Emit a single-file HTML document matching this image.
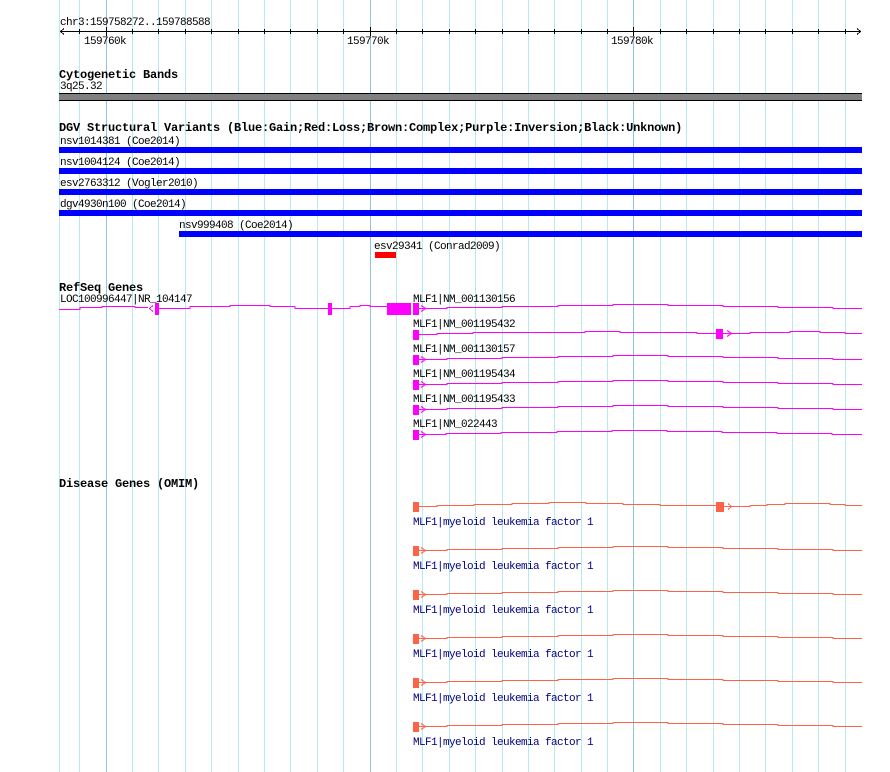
<!DOCTYPE html>
<html><head><meta charset="utf-8"><style>
html,body{margin:0;padding:0;background:#fff;}
svg{display:block;}
text{font-family:"Liberation Mono","DejaVu Sans Mono",monospace;font-size:11px;letter-spacing:-0.6px;fill:#000;}
text.h{font-weight:bold;font-size:12px;letter-spacing:-0.2px;}
text.d{fill:#000080;}
</style></head><body>
<svg width="890" height="772" viewBox="0 0 890 772" xmlns="http://www.w3.org/2000/svg">
<g stroke="#b4eaf2" stroke-width="1" shape-rendering="crispEdges">
<line x1="59.5" y1="0" x2="59.5" y2="772"/>
<line x1="79.5" y1="0" x2="79.5" y2="772"/>
<line x1="132.5" y1="0" x2="132.5" y2="772"/>
<line x1="158.5" y1="0" x2="158.5" y2="772"/>
<line x1="185.5" y1="0" x2="185.5" y2="772"/>
<line x1="211.5" y1="0" x2="211.5" y2="772"/>
<line x1="238.5" y1="0" x2="238.5" y2="772"/>
<line x1="264.5" y1="0" x2="264.5" y2="772"/>
<line x1="290.5" y1="0" x2="290.5" y2="772"/>
<line x1="317.5" y1="0" x2="317.5" y2="772"/>
<line x1="343.5" y1="0" x2="343.5" y2="772"/>
<line x1="396.5" y1="0" x2="396.5" y2="772"/>
<line x1="422.5" y1="0" x2="422.5" y2="772"/>
<line x1="449.5" y1="0" x2="449.5" y2="772"/>
<line x1="475.5" y1="0" x2="475.5" y2="772"/>
<line x1="502.5" y1="0" x2="502.5" y2="772"/>
<line x1="528.5" y1="0" x2="528.5" y2="772"/>
<line x1="554.5" y1="0" x2="554.5" y2="772"/>
<line x1="581.5" y1="0" x2="581.5" y2="772"/>
<line x1="607.5" y1="0" x2="607.5" y2="772"/>
<line x1="660.5" y1="0" x2="660.5" y2="772"/>
<line x1="686.5" y1="0" x2="686.5" y2="772"/>
<line x1="713.5" y1="0" x2="713.5" y2="772"/>
<line x1="739.5" y1="0" x2="739.5" y2="772"/>
<line x1="765.5" y1="0" x2="765.5" y2="772"/>
<line x1="792.5" y1="0" x2="792.5" y2="772"/>
<line x1="818.5" y1="0" x2="818.5" y2="772"/>
<line x1="845.5" y1="0" x2="845.5" y2="772"/>
</g>
<g stroke="#8cc4e6" stroke-width="1" shape-rendering="crispEdges">
<line x1="106.5" y1="0" x2="106.5" y2="772"/>
<line x1="370.5" y1="0" x2="370.5" y2="772"/>
<line x1="633.5" y1="0" x2="633.5" y2="772"/>
</g>

<!-- ruler -->
<text x="60" y="25">chr3:159758272..159788588</text>
<g stroke="#000" stroke-width="1" shape-rendering="crispEdges" fill="none">
<line x1="60" y1="31.5" x2="861" y2="31.5"/>
<path d="M64,28.5 L60.5,31.5 L64,34.5"/>
<path d="M857,28.5 L860.5,31.5 L857,34.5"/>
<line x1="79.5" y1="29" x2="79.5" y2="34"/><line x1="106.5" y1="27" x2="106.5" y2="36"/>
<line x1="132.5" y1="29" x2="132.5" y2="34"/><line x1="158.5" y1="29" x2="158.5" y2="34"/>
<line x1="185.5" y1="29" x2="185.5" y2="34"/><line x1="211.5" y1="29" x2="211.5" y2="34"/>
<line x1="238.5" y1="29" x2="238.5" y2="34"/><line x1="264.5" y1="29" x2="264.5" y2="34"/>
<line x1="290.5" y1="29" x2="290.5" y2="34"/><line x1="317.5" y1="29" x2="317.5" y2="34"/>
<line x1="343.5" y1="29" x2="343.5" y2="34"/><line x1="370.5" y1="27" x2="370.5" y2="36"/>
<line x1="396.5" y1="29" x2="396.5" y2="34"/><line x1="422.5" y1="29" x2="422.5" y2="34"/>
<line x1="449.5" y1="29" x2="449.5" y2="34"/><line x1="475.5" y1="29" x2="475.5" y2="34"/>
<line x1="502.5" y1="29" x2="502.5" y2="34"/><line x1="528.5" y1="29" x2="528.5" y2="34"/>
<line x1="554.5" y1="29" x2="554.5" y2="34"/><line x1="581.5" y1="29" x2="581.5" y2="34"/>
<line x1="607.5" y1="29" x2="607.5" y2="34"/><line x1="633.5" y1="27" x2="633.5" y2="36"/>
<line x1="660.5" y1="29" x2="660.5" y2="34"/><line x1="686.5" y1="29" x2="686.5" y2="34"/>
<line x1="713.5" y1="29" x2="713.5" y2="34"/><line x1="739.5" y1="29" x2="739.5" y2="34"/>
<line x1="765.5" y1="29" x2="765.5" y2="34"/><line x1="792.5" y1="29" x2="792.5" y2="34"/>
<line x1="818.5" y1="29" x2="818.5" y2="34"/><line x1="845.5" y1="29" x2="845.5" y2="34"/>
</g>
<text x="84" y="44">159760k</text>
<text x="347" y="44">159770k</text>
<text x="611" y="44">159780k</text>

<!-- cytogenetic -->
<text class="h" x="59" y="78">Cytogenetic Bands</text>
<text x="60" y="89">3q25.32</text>
<rect x="59" y="93" width="803" height="8" fill="#000"/>
<rect x="59" y="94" width="803" height="6" fill="#808080"/>

<!-- DGV -->
<text class="h" x="59" y="131">DGV Structural Variants (Blue:Gain;Red:Loss;Brown:Complex;Purple:Inversion;Black:Unknown)</text>
<text x="60" y="144">nsv1014381 (Coe2014)</text>
<rect x="59" y="147" width="803" height="6" fill="#0000ff"/>
<text x="60" y="165">nsv1004124 (Coe2014)</text>
<rect x="59" y="168" width="803" height="6" fill="#0000ff"/>
<text x="60" y="186">esv2763312 (Vogler2010)</text>
<rect x="59" y="189" width="803" height="6" fill="#0000ff"/>
<text x="60" y="207">dgv4930n100 (Coe2014)</text>
<rect x="59" y="210" width="803" height="6" fill="#0000ff"/>
<text x="179" y="228">nsv999408 (Coe2014)</text>
<rect x="179" y="231" width="683" height="6" fill="#0000ff"/>
<text x="374" y="249">esv29341 (Conrad2009)</text>
<rect x="375" y="252" width="21" height="6" fill="#ff0000"/>

<!-- RefSeq -->
<text class="h" x="59" y="291">RefSeq Genes</text>
<text x="60" y="302">LOC100996447|NR_104147</text>
<g fill="none" stroke="#ff00ff" stroke-width="1" shape-rendering="crispEdges">
<polyline points="59,309.5 80,309.5 80,307.5 102,307.5 102,306.5 135,306.5 135,307.5 148,307.5"/>
<path d="M153,305.5 L149.5,308.5 L153,311.5"/>
<polyline points="159,308.5 190,308.5 190,306.5 230,306.5 230,305.5 270,305.5 270,306.5 295,306.5 295,308.5 328,308.5"/>
<polyline points="332,308.5 350,308.5 350,306.5 360,306.5 360,305.5 370,305.5 370,306.5 387,306.5"/>
<path d="M421,305.5 L425.5,308.5 L421,311.5"/>
<polyline points="419,308.5 447,308.5 447,307.5 502,307.5 502,306.5 558,306.5 558,305.5 613,305.5 613,304.5 668,304.5 668,305.5 723,305.5 723,306.5 778,306.5 778,307.5 833,307.5 833,308.5 862,308.5"/>
<polyline points="419,334.5 437,334.5 437,333.5 473,333.5 473,332.5 585,332.5 585,331.5 620,331.5 620,332.5 697,332.5 697,333.5 716,333.5"/>
<path d="M727,330.5 L731.5,333.5 L727,336.5"/>
<polyline points="723,333.5 750,333.5 750,332.5 790,332.5 790,331.5 820,331.5 820,332.5 845,332.5 845,333.5 862,333.5"/>
</g>
<g fill="#ff00ff">
<rect x="155" y="303" width="4" height="12"/>
<rect x="328" y="303" width="4" height="12"/>
<rect x="387" y="303" width="24" height="12"/>
<rect x="413" y="303" width="6" height="12"/>
<rect x="413" y="330" width="6" height="10"/>
<rect x="716" y="329" width="7" height="10"/>
<rect x="413" y="355" width="6" height="10"/>
<rect x="413" y="380" width="6" height="10"/>
<rect x="413" y="405" width="6" height="10"/>
<rect x="413" y="430" width="6" height="10"/>
</g>
<g fill="none" stroke="#ff00ff" stroke-width="1" shape-rendering="crispEdges">
<path d="M421,356.5 L425.5,359.5 L421,362.5"/>
<polyline points="419,359.5 447,359.5 447,358.5 502,358.5 502,357.5 558,357.5 558,356.5 613,356.5 613,355.5 668,355.5 668,356.5 723,356.5 723,357.5 778,357.5 778,358.5 833,358.5 833,359.5 862,359.5"/>
<path d="M421,381.5 L425.5,384.5 L421,387.5"/>
<polyline points="419,384.5 447,384.5 447,383.5 502,383.5 502,382.5 558,382.5 558,381.5 613,381.5 613,380.5 668,380.5 668,381.5 723,381.5 723,382.5 778,382.5 778,383.5 833,383.5 833,384.5 862,384.5"/>
<path d="M421,406.5 L425.5,409.5 L421,412.5"/>
<polyline points="419,409.5 447,409.5 447,408.5 502,408.5 502,407.5 558,407.5 558,406.5 613,406.5 613,405.5 668,405.5 668,406.5 723,406.5 723,407.5 778,407.5 778,408.5 833,408.5 833,409.5 862,409.5"/>
<path d="M421,431.5 L425.5,434.5 L421,437.5"/>
<polyline points="419,434.5 446,434.5 446,433.5 501,433.5 501,432.5 557,432.5 557,431.5 612,431.5 612,430.5 667,430.5 667,431.5 722,431.5 722,432.5 777,432.5 777,433.5 832,433.5 832,434.5 862,434.5"/>
</g>
<text x="413" y="302">MLF1|NM_001130156</text>
<text x="413" y="327">MLF1|NM_001195432</text>
<text x="413" y="352">MLF1|NM_001130157</text>
<text x="413" y="377">MLF1|NM_001195434</text>
<text x="413" y="402">MLF1|NM_001195433</text>
<text x="413" y="427">MLF1|NM_022443</text>

<!-- Disease -->
<text class="h" x="59" y="487">Disease Genes (OMIM)</text>
<g fill="none" stroke="#ff6347" stroke-width="1" shape-rendering="crispEdges">
<polyline points="419,506.5 437,506.5 437,505.5 474,505.5 474,504.5 512,504.5 512,503.5 549,503.5 549,502.5 586,502.5 586,503.5 623,503.5 623,504.5 660,504.5 660,505.5 716,505.5"/>
<path d="M728,503.5 L731.5,506.5 L728,509.5"/>
<polyline points="724,506.5 750,506.5 750,505.5 767,505.5 767,504.5 785,504.5 785,503.5 830,503.5 830,504.5 845,504.5 845,505.5 862,505.5"/>
</g>
<rect x="413" y="502" width="6" height="10" fill="#ff6347"/>
<rect x="716" y="502" width="8" height="10" fill="#ff6347"/>
<text class="d" x="413" y="525">MLF1|myeloid leukemia factor 1</text>

<g fill="none" stroke="#ff6347" stroke-width="1" shape-rendering="crispEdges">
<path d="M421,547.5 L425.5,550.5 L421,553.5"/>
<polyline points="419,550.5 447,550.5 447,549.5 502,549.5 502,548.5 558,548.5 558,547.5 613,547.5 613,546.5 668,546.5 668,547.5 723,547.5 723,548.5 778,548.5 778,549.5 833,549.5 833,550.5 862,550.5"/>
<path d="M421,591.5 L425.5,594.5 L421,597.5"/>
<polyline points="419,594.5 447,594.5 447,593.5 502,593.5 502,592.5 558,592.5 558,591.5 613,591.5 613,590.5 668,590.5 668,591.5 723,591.5 723,592.5 778,592.5 778,593.5 833,593.5 833,594.5 862,594.5"/>
<path d="M421,635.5 L425.5,638.5 L421,641.5"/>
<polyline points="419,638.5 447,638.5 447,637.5 502,637.5 502,636.5 558,636.5 558,635.5 613,635.5 613,634.5 668,634.5 668,635.5 723,635.5 723,636.5 778,636.5 778,637.5 833,637.5 833,638.5 862,638.5"/>
<path d="M421,679.5 L425.5,682.5 L421,685.5"/>
<polyline points="419,682.5 447,682.5 447,681.5 502,681.5 502,680.5 558,680.5 558,679.5 613,679.5 613,678.5 668,678.5 668,679.5 723,679.5 723,680.5 778,680.5 778,681.5 833,681.5 833,682.5 862,682.5"/>
<path d="M421,723.5 L425.5,726.5 L421,729.5"/>
<polyline points="419,726.5 447,726.5 447,725.5 502,725.5 502,724.5 558,724.5 558,723.5 613,723.5 613,722.5 668,722.5 668,723.5 723,723.5 723,724.5 778,724.5 778,725.5 833,725.5 833,726.5 862,726.5"/>
</g>
<g fill="#ff6347">
<rect x="413" y="546" width="6" height="10"/>
<rect x="413" y="590" width="6" height="10"/>
<rect x="413" y="634" width="6" height="10"/>
<rect x="413" y="678" width="6" height="10"/>
<rect x="413" y="722" width="6" height="10"/>
</g>
<text class="d" x="413" y="569">MLF1|myeloid leukemia factor 1</text>
<text class="d" x="413" y="613">MLF1|myeloid leukemia factor 1</text>
<text class="d" x="413" y="657">MLF1|myeloid leukemia factor 1</text>
<text class="d" x="413" y="701">MLF1|myeloid leukemia factor 1</text>
<text class="d" x="413" y="745">MLF1|myeloid leukemia factor 1</text>
</svg>
</body></html>
